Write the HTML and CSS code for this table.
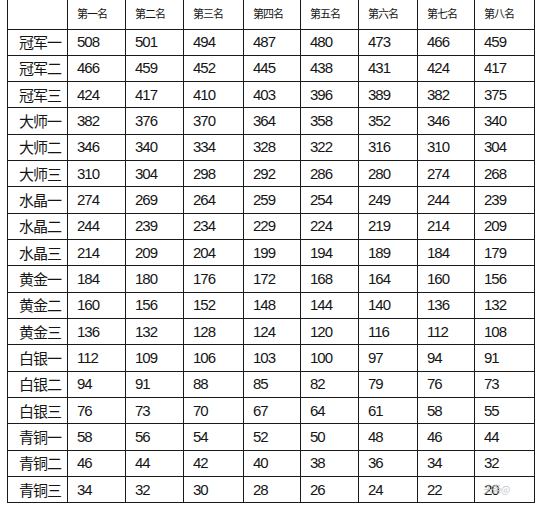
FILE: index.html
```html
<!DOCTYPE html>
<html lang="zh-CN">
<head>
<meta charset="utf-8">
<title>段位积分表</title>
<link rel="stylesheet" href="styles.css">
</head>
<body>
<div class="page">
<table class="rank">
<colgroup>
<col class="c0"><col class="c1"><col class="c2"><col class="c3"><col class="c4"><col class="c5"><col class="c6"><col class="c7"><col class="c8">
</colgroup>
<thead>
<tr><th></th><th>第一名</th><th>第二名</th><th>第三名</th><th>第四名</th><th>第五名</th><th>第六名</th><th>第七名</th><th>第八名</th></tr>
</thead>
<tbody>
<tr><td class="lbl">冠军一</td><td>508</td><td>501</td><td>494</td><td>487</td><td>480</td><td>473</td><td>466</td><td>459</td></tr>
<tr><td class="lbl">冠军二</td><td>466</td><td>459</td><td>452</td><td>445</td><td>438</td><td>431</td><td>424</td><td>417</td></tr>
<tr><td class="lbl">冠军三</td><td>424</td><td>417</td><td>410</td><td>403</td><td>396</td><td>389</td><td>382</td><td>375</td></tr>
<tr><td class="lbl">大师一</td><td>382</td><td>376</td><td>370</td><td>364</td><td>358</td><td>352</td><td>346</td><td>340</td></tr>
<tr><td class="lbl">大师二</td><td>346</td><td>340</td><td>334</td><td>328</td><td>322</td><td>316</td><td>310</td><td>304</td></tr>
<tr><td class="lbl">大师三</td><td>310</td><td>304</td><td>298</td><td>292</td><td>286</td><td>280</td><td>274</td><td>268</td></tr>
<tr><td class="lbl">水晶一</td><td>274</td><td>269</td><td>264</td><td>259</td><td>254</td><td>249</td><td>244</td><td>239</td></tr>
<tr><td class="lbl">水晶二</td><td>244</td><td>239</td><td>234</td><td>229</td><td>224</td><td>219</td><td>214</td><td>209</td></tr>
<tr><td class="lbl">水晶三</td><td>214</td><td>209</td><td>204</td><td>199</td><td>194</td><td>189</td><td>184</td><td>179</td></tr>
<tr><td class="lbl">黄金一</td><td>184</td><td>180</td><td>176</td><td>172</td><td>168</td><td>164</td><td>160</td><td>156</td></tr>
<tr><td class="lbl">黄金二</td><td>160</td><td>156</td><td>152</td><td>148</td><td>144</td><td>140</td><td>136</td><td>132</td></tr>
<tr><td class="lbl">黄金三</td><td>136</td><td>132</td><td>128</td><td>124</td><td>120</td><td>116</td><td>112</td><td>108</td></tr>
<tr><td class="lbl">白银一</td><td>112</td><td>109</td><td>106</td><td>103</td><td>100</td><td>97</td><td>94</td><td>91</td></tr>
<tr><td class="lbl">白银二</td><td>94</td><td>91</td><td>88</td><td>85</td><td>82</td><td>79</td><td>76</td><td>73</td></tr>
<tr><td class="lbl">白银三</td><td>76</td><td>73</td><td>70</td><td>67</td><td>64</td><td>61</td><td>58</td><td>55</td></tr>
<tr><td class="lbl">青铜一</td><td>58</td><td>56</td><td>54</td><td>52</td><td>50</td><td>48</td><td>46</td><td>44</td></tr>
<tr><td class="lbl">青铜二</td><td>46</td><td>44</td><td>42</td><td>40</td><td>38</td><td>36</td><td>34</td><td>32</td></tr>
<tr><td class="lbl">青铜三</td><td>34</td><td>32</td><td>30</td><td>28</td><td>26</td><td>24</td><td>22</td><td>20</td></tr>
</tbody>
</table>
<div class="watermark">头条@</div>
</div>
</body>
</html>
```
FILE: styles.css
```css
html, body {
  margin: 0;
  padding: 0;
  background: #ffffff;
}
.page {
  position: relative;
  width: 541px;
  height: 507px;
  padding-left: 7px;
  box-sizing: border-box;
  overflow: hidden;
}
.rank {
  border-collapse: collapse;
  table-layout: fixed;
  width: 527px;
  color: #151515;
}
.c0 { width: 60px; }
.c1 { width: 58px; }
.c2 { width: 58px; }
.c3 { width: 60px; }
.c4 { width: 57px; }
.c5 { width: 58px; }
.c6 { width: 59px; }
.c7 { width: 57px; }
.c8 { width: 60px; }
.rank thead tr { height: 29px; }
.rank tbody tr { height: 26.33px; }
.rank th, .rank td {
  border: 1px solid #1a1a1a;
  padding: 0 0 0 9px;
  text-align: left;
  white-space: nowrap;
  overflow: hidden;
  line-height: 14px;
  height: auto;
  vertical-align: middle;
}
.rank th {
  border-top: none;
  font-family: "Noto Sans CJK SC", sans-serif;
  font-size: 11px;
  font-weight: normal;
  letter-spacing: -1px;
  padding-bottom: 2px;
}
.rank td {
  font-family: "Liberation Sans", Arial, sans-serif;
  font-size: 15px;
  letter-spacing: -1px;
}
.rank td.lbl {
  font-family: "Noto Sans CJK SC", sans-serif;
  font-size: 15px;
  letter-spacing: -1px;
  padding-left: 11px;
}
.watermark {
  position: absolute;
  left: 483px;
  top: 482px;
  font-family: "Noto Sans CJK SC", sans-serif;
  font-size: 10px;
  line-height: 14px;
  color: #c8c8c8;
  letter-spacing: -1px;
}
```
